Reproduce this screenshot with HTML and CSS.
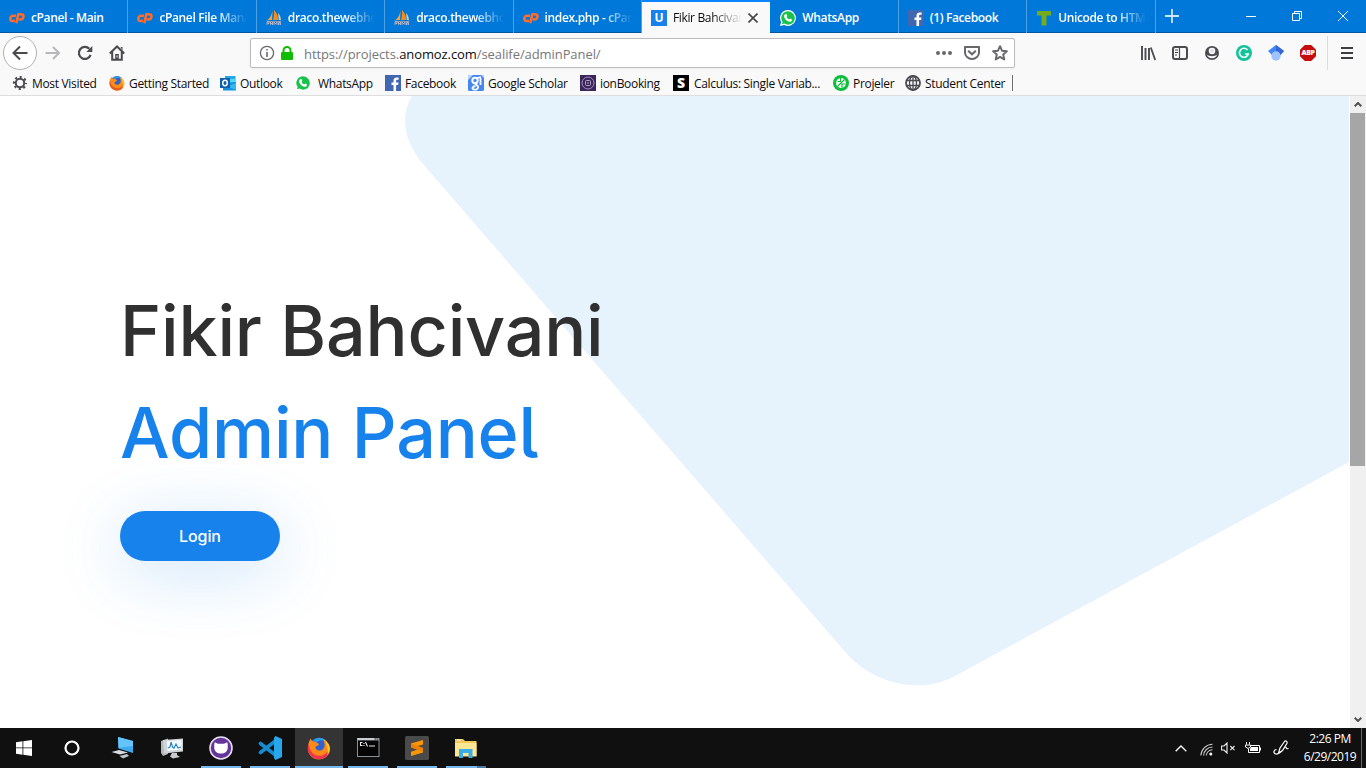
FILE: index.html
```html
<!DOCTYPE html>
<html lang="en">
<head>
<meta charset="utf-8">
<title>Fikir Bahcivani</title>
<link rel="stylesheet" href="styles.css">
</head>
<body>
<svg class="defs" width="0" height="0" aria-hidden="true">
  <symbol id="cpanel" viewBox="0 0 16 16"><g fill="none" stroke="#ff6c2c" stroke-width="2.600" stroke-linejoin="round"><path d="M7 5.800H4.200C2.600 5.800 1.600 6.900 1.400 8.300C1.200 9.800 1.900 11 3.300 11H6"/><path d="M7.300 13.200L9.300 4.200H12C13.700 4.200 14.800 5.300 14.400 7C14 8.600 12.900 9.500 11.300 9.500H9.700"/></g></symbol>
  <symbol id="pma" viewBox="0 0 16 16"><path d="M6.500 1L6 10H1.500C4 8 5.700 5 6.500 1Z" fill="#f6a33a"/><path d="M8 0C11 3 12 6 12 10H7C8 7 8.300 4 8 0Z" fill="#f28e1c"/><path d="M12 3C14 5 14.800 7.500 15 10H12.700Z" fill="#d8c7a4"/><path d="M0 10.600C5 11.500 11 11.500 16 10.400L14.500 12H1.500Z" fill="#a9a3ac"/><path d="M1 15V12H3V13.500H1.500M4.500 12V15M4.500 13.500H6.500M6.500 12V15M8 15V12L9.500 14L11 12V15M12.500 15V12.500H14.500V15M12.500 14H14.500" fill="none" stroke="#aeb2cc" stroke-width="1"/></symbol>
  <symbol id="whatsapp" viewBox="0 0 16 16"><path d="M8 0A8 8 0 1 1 4.200 15.100L0 16L1.100 12A8 8 0 0 1 8 0Z" fill="#fff"/><path d="M8 1.300A6.700 6.700 0 1 1 4.400 13.600L1.900 14.200L2.600 11.900A6.700 6.700 0 0 1 8 1.300Z" fill="#19c24b"/><path d="M5.300 4.200L6.500 4.100L7.300 6L6.600 7C7.200 8.200 8 8.900 9.200 9.500L10.100 8.500L12 9.400C12.100 11 11 11.800 9.800 11.700C6.500 11.200 4.300 8.500 4.100 6.200C4.100 5.300 4.600 4.500 5.300 4.200Z" fill="#fff"/></symbol>
  <symbol id="facebook" viewBox="0 0 16 16"><path d="M0 0H16V16H0Z" fill="#4267b2"/><path d="M8.500 16V10H6.500V7.500H8.500V5.700C8.500 3.500 9.800 2.400 11.800 2.400H13.600V4.800H12.400C11.400 4.800 11.100 5.300 11.100 6V7.500H13.500L13.100 10H11.100V16Z" fill="#fff"/></symbol>
  <symbol id="firefox" viewBox="0 0 24 24"><circle cx="12" cy="11" r="9.500" fill="#2f62d0"/><path d="M6 5C9 .8 17 .8 20 6C16 3.500 12 4 10 6Z" fill="#26a3e8"/><path d="M3.500 2.500C4.500 5 6 5.500 8 5.800C10.500 6.500 12 7.800 11.800 9C11 10 8.500 9.600 8.300 11.500C9 14.800 13.500 15.600 16 13.200C18.500 10.500 18 6.500 15.500 3C21 5.500 23.800 9.500 23 14C22 20 17 23.500 12 23.500C5.500 23.500 .8 18.500 .8 12.500C.8 8.500 2 5.500 3.500 2.500Z" fill="#ff8a16"/><path d="M2 8C2 16 8 21 15 19.500C18 18.500 20 16.500 21 14.500C21.500 17 21 19 19.500 20.500C13 26 1 22.500 .8 12.500C.9 10.500 1.200 9.200 2 8Z" fill="var(--flame, #e25a24)"/><path d="M17 3.500C23.500 8 24 15 20.500 19C21 14 20.500 8 17 3.500Z" fill="#ffc928"/></symbol>
</svg>

<div class="screen">
  <header class="tabs">
    <div class="tab"><svg class="ico"><use href="#cpanel"/></svg><span class="tab-label">cPanel - Main</span></div>
    <div class="tab"><svg class="ico"><use href="#cpanel"/></svg><span class="tab-label fade">cPanel File Mana</span></div>
    <div class="tab"><svg class="ico"><use href="#pma"/></svg><span class="tab-label fade">draco.thewebho</span></div>
    <div class="tab"><svg class="ico"><use href="#pma"/></svg><span class="tab-label fade">draco.thewebho</span></div>
    <div class="tab"><svg class="ico"><use href="#cpanel"/></svg><span class="tab-label fade">index.php - cPan</span></div>
    <div class="tab active"><span class="ico u-icon">U</span><span class="tab-label fade">Fikir Bahcivan</span><svg class="close" viewBox="0 0 10 10"><path d="M.5 .5L9.500 9.500M9.500 .5L.5 9.500" stroke="#444" stroke-width="1.600"/></svg></div>
    <div class="tab after-active"><svg class="ico"><use href="#whatsapp"/></svg><span class="tab-label">WhatsApp</span></div>
    <div class="tab"><svg class="ico"><use href="#facebook"/></svg><span class="tab-label">(1) Facebook</span></div>
    <div class="tab"><svg class="ico" viewBox="0 0 16 16"><path d="M1 1H15V5.500H10.500V15.500H5.500V5.500H1Z" fill="#76ac1c"/></svg><span class="tab-label fade">Unicode to HTM</span></div>
    <svg class="new-tab" viewBox="0 0 14 14"><path d="M7 0V14M0 7H14" stroke="#cfe4f7" stroke-width="1.800"/></svg>
    <div class="window-controls">
      <svg viewBox="0 0 10 10"><path d="M0 5.500H10" stroke="#fff"/></svg>
      <svg viewBox="0 0 10 10"><path d="M.5 2.500H7.500V9.500H.5ZM2.500 2.500V.5H9.500V7.500H7.500" fill="none" stroke="#fff"/></svg>
      <svg viewBox="0 0 10 10"><path d="M0 0L10 10M10 0L0 10" stroke="#fff"/></svg>
    </div>
  </header>

  <nav class="toolbar">
    <div class="nav-buttons">
      <span class="back"><svg class="ico" viewBox="0 0 16 16"><path d="M15.500 8H1.500M8 1.500L1.500 8L8 14.500" fill="none" stroke="#4a4a4f" stroke-width="2"/></svg></span>
      <svg class="ico" viewBox="0 0 16 16"><path d="M.5 8H14M8 2L14 8L8 14" fill="none" stroke="#b8b8ba" stroke-width="2"/></svg>
      <svg class="ico" viewBox="0 0 16 16"><path d="M13.600 9.800A6 6 0 1 1 12.300 3.800" fill="none" stroke="#4a4a4f" stroke-width="2.200"/><path d="M15.300 1V7H9.300Z" fill="#4a4a4f"/></svg>
      <svg class="ico" viewBox="0 0 16 16"><path d="M.8 8.500L8 1.500L15.200 8.500M3.200 7V14.800H12.800V7" fill="none" stroke="#4a4a4f" stroke-width="2"/><path d="M6.200 15V9H9.800V15M11.500 2H13.500V6Z" fill="#4a4a4f"/><path d="M8 10.500V12.500" stroke="#f9f9fa"/></svg>
    </div>
    <div class="url-bar">
      <svg class="ico info" viewBox="0 0 16 16"><circle cx="8" cy="8" r="6.600" fill="none" stroke="#6a6a6e" stroke-width="1.300"/><path d="M8 7V12M8 4V5.600" stroke="#6a6a6e" stroke-width="1.600"/></svg>
      <svg class="lock" viewBox="0 0 12 14"><path d="M2.500 7V4.500A3.500 3.500 0 0 1 9.500 4.500V7" fill="none" stroke="#12bc00" stroke-width="2"/><rect y="6" width="12" height="8" rx="1" fill="#12bc00"/></svg>
      <span class="url">https://projects.<b>anomoz.com</b>/sealife/adminPanel/</span>
      <div class="url-actions">
        <svg class="ico" viewBox="0 0 16 16"><g fill="#68686c"><circle cx="2" cy="8" r="2"/><circle cx="8" cy="8" r="2"/><circle cx="14" cy="8" r="2"/></g></svg>
        <svg class="ico" viewBox="0 0 16 16"><path d="M1 2H15V7.500A7 6.500 0 0 1 1 7.500Z" fill="none" stroke="#68686c" stroke-width="2" stroke-linejoin="round"/><path d="M4.700 6.200L8 9.300L11.300 6.200" fill="none" stroke="#68686c" stroke-width="2" stroke-linecap="round"/></svg>
        <svg class="ico" viewBox="0 0 16 16"><path d="M8 1.200L10 5.700L14.900 6.200L11.200 9.500L12.300 14.500L8 11.900L3.700 14.500L4.800 9.500L1.100 6.200L6 5.700Z" fill="none" stroke="#68686c" stroke-width="1.900" stroke-linejoin="round"/></svg>
      </div>
    </div>
    <div class="extensions">
      <svg class="ico" viewBox="0 0 16 16"><path d="M2 1V15M5.500 3V15M9 3V15" stroke="#4a4a4f" stroke-width="1.900"/><path d="M10.800 2.500L15.200 15" stroke="#4a4a4f" stroke-width="1.800"/></svg>
      <svg class="ico" viewBox="0 0 16 16"><rect x="1" y="2" width="14" height="12" rx="2" fill="none" stroke="#4a4a4f" stroke-width="2"/><path d="M7.500 2V14M3 5H6M3 7.500H6M3 10H5" stroke="#4a4a4f" stroke-width="1.200"/></svg>
      <svg class="ico" viewBox="0 0 16 16"><circle cx="8" cy="8" r="7" fill="#4a4a4f"/><path d="M8 2.700A3.200 3.200 0 0 1 11.300 6C11.300 8 10 9.300 8 9.300S4.700 8 4.700 6A3.200 3.200 0 0 1 8 2.700Z" fill="#f9f9fa"/><circle cx="8" cy="5.800" r="1.900" fill="#4a4a4f" opacity=".15"/><path d="M3 9.500C4.500 11.800 11.500 11.800 13 9.500C12.500 12 10.500 13.200 8 13.200S3.500 12 3 9.500Z" fill="#f9f9fa"/></svg>
      <svg class="ico" viewBox="0 0 16 16"><circle cx="8" cy="8" r="8" fill="#15c39a"/><path d="M11.500 5A4.500 4.500 0 1 0 12.300 9H9" fill="none" stroke="#fff" stroke-width="1.600"/></svg>
      <svg class="ico" viewBox="0 0 16 16"><path d="M8 0L16 6L12.500 10H4L0 6Z" fill="#4285f4"/><path d="M8 0L16 6L12.500 10L8 7Z" fill="#3367d6"/><circle cx="8" cy="11" r="4.700" fill="#a0c3ff"/></svg>
      <span class="ico abp">ABP</span>
    </div>
    <div class="menu"><svg viewBox="0 0 12 12"><path d="M0 1H12M0 6H12M0 11H12" stroke="#3e3e42" stroke-width="2"/></svg></div>
  </nav>

  <nav class="bookmarks">
    <div class="bm bm-visited"><svg class="ico" viewBox="0 0 16 16"><circle cx="8" cy="8" r="4.200" fill="none" stroke="#4a4a4f" stroke-width="2"/><circle cx="8" cy="8" r="6" fill="none" stroke="#4a4a4f" stroke-width="2.200" stroke-dasharray="2.100 2.612" stroke-dashoffset="1.050"/></svg><span>Most Visited</span></div>
    <div class="bm bm-started"><svg class="ico"><use href="#firefox"/></svg><span>Getting Started</span></div>
    <div class="bm bm-outlook"><svg class="ico" viewBox="0 0 16 16"><path d="M5 1H15.500V8H5Z" fill="#28a8ea"/><path d="M10 4H15.500V8H10Z" fill="#50d9ff"/><path d="M3 8L16 7V15.500H3Z" fill="#1490df"/><path d="M16 8V15L7 11.500Z" fill="#35b8f1"/><path d="M0 3H10V13H0Z" fill="#0f5fae"/><ellipse cx="5" cy="8" rx="2.300" ry="2.700" fill="none" stroke="#fff" stroke-width="1.500"/></svg><span>Outlook</span></div>
    <div class="bm bm-whatsapp"><svg class="ico"><use href="#whatsapp"/></svg><span>WhatsApp</span></div>
    <div class="bm bm-facebook"><svg class="ico"><use href="#facebook"/></svg><span>Facebook</span></div>
    <div class="bm bm-scholar"><svg class="ico" viewBox="0 0 16 16"><rect width="16" height="16" rx="1.500" fill="#4688f1"/><path d="M0 5L5 0H0ZM13 0L16 3V0Z" fill="#b9d2fb"/><circle cx="7" cy="5.500" r="2.700" fill="none" stroke="#fff" stroke-width="1.900"/><path d="M9 3L13 2M9.500 7L7.500 9L10 11.300C11 13.500 8 15 6 14.500C3.500 14 4 11.500 7.500 11M12.500 3V10" fill="none" stroke="#fff" stroke-width="1.800"/></svg><span>Google Scholar</span></div>
    <div class="bm bm-ion"><svg class="ico" viewBox="0 0 16 16"><path d="M0 0H16V16H0Z" fill="#39265a"/><circle cx="8" cy="8" r="6" fill="none" stroke="#a78db8"/><rect x="5.500" y="5.500" width="5" height="5" rx="1" fill="none" stroke="#b7a1c6"/><path d="M7 8H9" stroke="#b7a1c6"/></svg><span>ionBooking</span></div>
    <div class="bm bm-calculus"><span class="ico s-icon">S</span><span>Calculus: Single Variab...</span></div>
    <div class="bm bm-projeler"><svg class="ico" viewBox="0 0 16 16"><circle cx="8" cy="8" r="8" fill="#10bd3c"/><circle cx="8" cy="8" r="4.900" fill="#fff"/><path d="M7.500 3V6.500H4.500M12.500 9H9V12.500M4.500 11.500L11.500 4.500" fill="none" stroke="#10bd3c" stroke-width="1.200"/></svg><span>Projeler</span></div>
    <div class="bm bm-student"><svg class="ico" viewBox="0 0 16 16"><g fill="none" stroke="#4a4a4f" stroke-width="1.300"><circle cx="8" cy="8" r="7" stroke-width="1.800"/><ellipse cx="8" cy="8" rx="3.500" ry="7"/><path d="M1.500 5.500H14.500M1.500 10.500H14.500M8 1V15"/></g></svg><span>Student Center</span></div>
    <i class="bm-line"></i>
  </nav>

  <div class="viewport">
    <main class="page">
      <svg class="blob" viewBox="0 0 1350 632" aria-hidden="true"><path d="M412 0C401 18 402 43 423 68L847 558C875 589 922 598 955 580L1349 366V0Z" fill="#e6f2fc"/></svg>
      <section class="hero">
        <h1>Fikir Bahcivani</h1>
        <h2>Admin Panel</h2>
        <a class="login">Login</a>
      </section>
    </main>
    <aside class="scrollbar">
      <svg viewBox="0 0 8 5"><path d="M.7 4.300L4 1L7.300 4.300" fill="none" stroke="#505050" stroke-width="2"/></svg>
      <i class="thumb"></i>
      <svg class="down" viewBox="0 0 8 5"><path d="M.7 .7L4 4L7.300 .7" fill="none" stroke="#505050" stroke-width="2"/></svg>
    </aside>
  </div>

  <footer class="taskbar">
    <div class="start">
      <svg viewBox="0 0 16 16"><path d="M0 2.200L6.500 1.300V7.500H0ZM7.300 1.200L16 0V7.500H7.300ZM0 8.300H6.500V14.700L0 13.800ZM7.300 8.300H16V16L7.300 14.800Z" fill="#fff"/></svg>
      <svg viewBox="0 0 16 16"><circle cx="8" cy="8" r="6.500" fill="none" stroke="#fff" stroke-width="2.200"/></svg>
    </div>
    <div class="apps">
      <span class="app"><svg viewBox="0 0 24 24"><path d="M7 1L22 5V17L7.500 12.500Z" fill="#3da9ee"/><path d="M7 1L22 5V10L7.500 12Z" fill="#64c3fa"/><path d="M.5 16L8 14L17 16.500L9 18.500Z" fill="#d8dde1"/><path d="M8.500 20L16 18L18 20L12 22.500Z" fill="#bfc5c9"/></svg></span>
      <span class="app"><svg viewBox="0 0 24 24"><path d="M1 5L8 2.500V18L3 20L1 17Z" fill="#b5b9bb"/><path d="M3 4L23 2.500V15.500L4 17.500Z" fill="#d0d4d6"/><path d="M7 5L21.500 4V13.500L7.500 15Z" fill="#f4faff"/><path d="M8 12L10 11L11 6L12.500 11L14 12L16 8L18 12L21 11" fill="none" stroke="#2f87c5" stroke-width="1.200"/><path d="M12 17H17V19L20 21L13 22.500L10 20.500Z" fill="#c8cbcd"/></svg></span>
      <span class="app open"><svg viewBox="0 0 24 24"><circle cx="12" cy="12" r="11" fill="#65349b" stroke="#e7dff0" stroke-width="1.600"/><path d="M5.800 6.200L9 7.800H15L18.200 6.200C19 8.500 18.700 10 18.700 12C18.500 15.500 16 17.500 12 17.500S5.500 15.500 5.300 12C5.300 10 5 8.500 5.800 6.200Z" fill="#fff"/></svg></span>
      <span class="app open"><svg viewBox="0 0 24 24"><path d="M2.500 7.500L18 19.500M2.500 16.500L18 4.500" stroke="#168bd0" stroke-width="3.600" stroke-linecap="round"/><path d="M17.500 0L24 3V21L17.500 24L16 22V2Z" fill="#28a8ec"/></svg></span>
      <span class="app open current"><svg><use href="#firefox"/></svg></span>
      <span class="app open"><svg viewBox="0 0 24 24"><path d="M1 2H23.500V21H1Z" fill="#8d9296"/><path d="M2 4.500H22.500V20H2Z" fill="#050505"/><path d="M1.500 3H18" stroke="#e4e8ea" stroke-width="1.400"/><path d="M19 3H20M21 3H22" stroke="#365a7e"/><path d="M6.500 6.500H4.500V9.500H6.500M8 7V8M8 9V10M9.500 6L11.500 10.500M13 10H19" fill="none" stroke="#e8e8e8" stroke-width="1.100"/></svg></span>
      <span class="app open"><svg viewBox="0 0 24 24"><rect width="24" height="24" rx="1.500" fill="#4a4a4b"/><path d="M18 4V8.500L11 10.500L18 12.500V16.500L6 20V15.800L13 13.500L6 11.300V7.500Z" fill="#ff9800"/><path d="M6 7.500L18 11.700V16L6 11.500Z" fill="#ef8100"/></svg></span>
      <span class="app open explorer"><svg viewBox="0 0 24 24"><path d="M1 3H9L11 5H22.500V20H1Z" fill="#f1c95a"/><path d="M1 7H22.500V20.500H1Z" fill="#ffe694"/><path d="M5 13H18.500V22H14.500V17H9V22H5Z" fill="#38aee4"/><path d="M3 4H7" stroke="#fff"/></svg></span>
    </div>
    <div class="tray">
      <svg class="chev" viewBox="0 0 12 7"><path d="M.7 6.300L6 1L11.300 6.300" fill="none" stroke="#fff" stroke-width="1.300"/></svg>
      <svg class="wifi" viewBox="0 0 13 13"><g fill="none" stroke="#c9c9c9" stroke-width="1.100"><path d="M.8 12.500A12 12 0 0 1 12.500 1.200M3.600 12.500A9 9 0 0 1 12.500 4M6.300 12.500A6.500 6.500 0 0 1 12.500 6.800"/></g><circle cx="10.800" cy="11" r="1.500" fill="#fff"/></svg>
      <svg class="sound" viewBox="0 0 15 12"><path d="M.6 4H3L6 1V11L3 8H.6Z" fill="none" stroke="#eee" stroke-width="1.100"/><path d="M9.300 4L13.500 8.200M13.500 4L9.300 8.200" stroke="#eee" stroke-width="1.100"/></svg>
      <svg class="battery" viewBox="0 0 16 12"><path d="M5.500 3.500H14.500V10.500H3.500V7" fill="none" stroke="#fff"/><path d="M6 5H13V9H5V7Z" fill="#fff"/><path d="M15.500 5.500V8.500M1.500 0V2.500M4.500 0V2.500M.5 3H5.500V5L3 6.500L.5 5Z" fill="none" stroke="#fff"/></svg>
      <svg class="pen" viewBox="0 0 17 16"><path d="M5.500 13L7 8L11.500 1.500C12.500 0 14.800 1.500 14 3.200L9.500 10.500ZM3.500 9.500C.5 9.500 0 13.500 3 14C6 14.500 7.500 12 9.500 10.500C11 9.300 11 7 12.500 7C13.800 7 12.500 9.500 15.500 8.500" fill="none" stroke="#fff" stroke-width="1.200"/></svg>
      <div class="clock"><span>2:26 PM</span><span>6/29/2019</span></div>
      <i class="desktop-line"></i>
    </div>
  </footer>
</div>
</body>
</html>
```
FILE: styles.css
```css
* { box-sizing: border-box; }
body { margin: 0; overflow: hidden; font-family: "Open Sans", "Noto Sans", sans-serif; }
svg { display: block; flex: none; }
.defs { position: absolute; }
.screen { width: 1366px; height: 768px; display: flex; flex-direction: column; background: #fff; }
.ico { width: 16px; height: 16px; flex: none; }

.tabs { height: 33px; display: flex; background: #0078d9; box-shadow: inset 0 -1px #0057a0; flex: none; }
.tab { width: 128.4px; height: 33px; display: flex; align-items: center; padding: 2px 9px 0; gap: 6px; border-right: 1px solid #4da1e5; color: #fff; flex: none; }
.tab-label { flex: 1; min-width: 0; white-space: nowrap; font-size: 12px; font-weight: 600; letter-spacing: -0.36px; line-height: 18px; }
.fade { -webkit-mask-image: linear-gradient(90deg, #000 calc(100% - 30px), transparent); mask-image: linear-gradient(90deg, #000 calc(100% - 30px), transparent); }
.tab.active { background: #f9f9fa; color: #0c0c0d; border-right: 0; border-top: 2px solid #0a84ff; padding-top: 0; }
.tab.active .tab-label { font-weight: 400; letter-spacing: -0.35px; }
.tab.after-active { padding-left: 10px; }
.u-icon { background: #1782eb; color: #fff; font-size: 12px; font-weight: 700; line-height: 16px; text-align: center; }
.close { width: 10px; height: 10px; margin-right: 3px; }
.new-tab { width: 14px; height: 14px; margin: 9px 0 0 9px; }
.window-controls { margin: 11px 18px 0 auto; display: flex; gap: 36px; }
.window-controls svg { width: 10px; height: 10px; }

.toolbar { height: 38px; display: flex; background: #f9f9fa; flex: none; }
.nav-buttons { width: 250px; height: 40px; display: flex; align-items: center; gap: 16px; padding-left: 3px; }
.back { width: 34px; height: 34px; border: 1px solid #b1b1b3; border-radius: 50%; background: #fff; display: flex; align-items: center; justify-content: center; margin-right: -8px; }
.url-bar { width: 765px; height: 30px; margin-top: 5px; border: 1px solid #bdbdbf; border-radius: 2px; background: #fff; box-shadow: 0 1px 3px #0000000d; display: flex; align-items: center; padding: 0 6px 0 8px; flex: none; }
.lock { width: 12px; height: 14px; margin: 0 11px 0 6px; }
.url { padding-top: 2px; font-size: 13px; letter-spacing: -0.08px; color: #77777a; white-space: nowrap; }
.url b { font-weight: 400; color: #0c0c0d; }
.url-actions { margin-left: auto; display: flex; gap: 12px; }
.extensions { margin-left: 125px; height: 40px; display: flex; align-items: center; gap: 16px; }
.abp { background: #c70d0c; color: #fff; font-size: 7px; font-weight: 800; line-height: 16px; text-align: center; letter-spacing: -0.4px; clip-path: polygon(30% 0, 70% 0, 100% 30%, 100% 70%, 70% 100%, 30% 100%, 0 70%, 0 30%); }
.menu { margin: 3px 0 0 11px; height: 34px; border-left: 1px solid #dcdcde; padding: 11px 0 0 13px; }
.menu svg { width: 12px; height: 12px; }

.bookmarks { height: 25px; display: flex; align-items: center; background: #f9f9fa; border-bottom: 1px solid #dedee0; padding-left: 12px; flex: none; }
.bm { display: flex; align-items: center; gap: 4px; font-size: 12px; line-height: 16px; letter-spacing: -0.32px; color: #0c0c0d; white-space: nowrap; flex: none; }
.bm > span:last-child { padding-top: 2px; }
.bm-visited { width: 97px; }
.bm-started { width: 111px; }
.bm-outlook { width: 75px; }
.bm-whatsapp { width: 90px; gap: 7px; }
.bm-facebook { width: 83px; }
.bm-scholar { width: 112px; }
.bm-ion { width: 93px; }
.bm-calculus { width: 160px; gap: 5px; }
.bm-projeler { width: 72px; }
.bm-student { width: 107px; }
.s-icon { background: #000; color: #fff; font-size: 14px; font-weight: 800; line-height: 15px; text-align: center; letter-spacing: 0; }
.bm-line { width: 1px; height: 16px; background: #707073; }

.viewport { height: 632px; display: flex; flex: none; }
.page { width: 1350px; position: relative; font-family: Inter, "Liberation Sans", sans-serif; }
.blob { position: absolute; inset: 0; width: 1350px; height: 632px; }
.hero { position: relative; padding: 184px 0 0 120px; }
.hero h1, .hero h2 { margin: 0; font-size: 70px; font-weight: 500; line-height: 102px; white-space: nowrap; font-feature-settings: "cv05" 1; }
.hero h1 { color: #303030; letter-spacing: -0.2px; }
.hero h2 { color: #1782eb; letter-spacing: -0.2px; }
.login { width: 160px; height: 50px; margin-top: 27px; border-radius: 25px; background: #1782eb; color: #fff; display: flex; align-items: center; justify-content: center; font-size: 16px; font-weight: 500; letter-spacing: -0.1px; box-shadow: 0 12px 66px #1782eb38; }
.scrollbar { width: 16px; background: #f0f0f0; display: flex; flex-direction: column; align-items: center; padding: 6px 1px 0 0; }
.scrollbar svg { width: 8px; height: 5px; }
.thumb { width: 15px; height: 353px; margin-top: 6px; background: #a6a6a6; }
.scrollbar .down { margin: auto 0 6px; }

.taskbar { height: 40px; display: flex; background: #101010; flex: none; }
.start { display: flex; align-items: center; gap: 32px; padding-left: 16px; width: 99px; }
.start svg { width: 16px; height: 16px; }
.apps { display: flex; gap: 1px; }
.app { width: 48px; height: 40px; display: flex; align-items: center; justify-content: center; }
.app svg { width: 24px; height: 24px; }
.open { background: linear-gradient(#76b9ed, #76b9ed) 50% 100% / 40px 2px no-repeat; }
.current { background: linear-gradient(#76b9ed, #76b9ed) 50% 100% / 48px 2px no-repeat #343434; --flame: #f3344f; }
.explorer { background: linear-gradient(90deg, #76b9ed 31px, #4b7ba2 31px) 50% 100% / 40px 2px no-repeat; }
.tray { margin-left: auto; display: flex; align-items: center; }
.chev { width: 12px; height: 7px; margin-right: 13px; }
.wifi { width: 13px; height: 13px; margin: 2px 8px 0 0; }
.sound { width: 15px; height: 12px; margin-right: 9px; }
.battery { width: 16px; height: 12px; margin-right: 12px; }
.pen { width: 17px; height: 16px; margin-right: 9px; }
.clock { width: 62px; display: flex; flex-direction: column; align-items: center; color: #fff; font-size: 12px; letter-spacing: -0.5px; line-height: 18px; white-space: nowrap; }
.desktop-line { width: 1px; height: 40px; margin: 0 4px 0 0; background: #666; }
```
